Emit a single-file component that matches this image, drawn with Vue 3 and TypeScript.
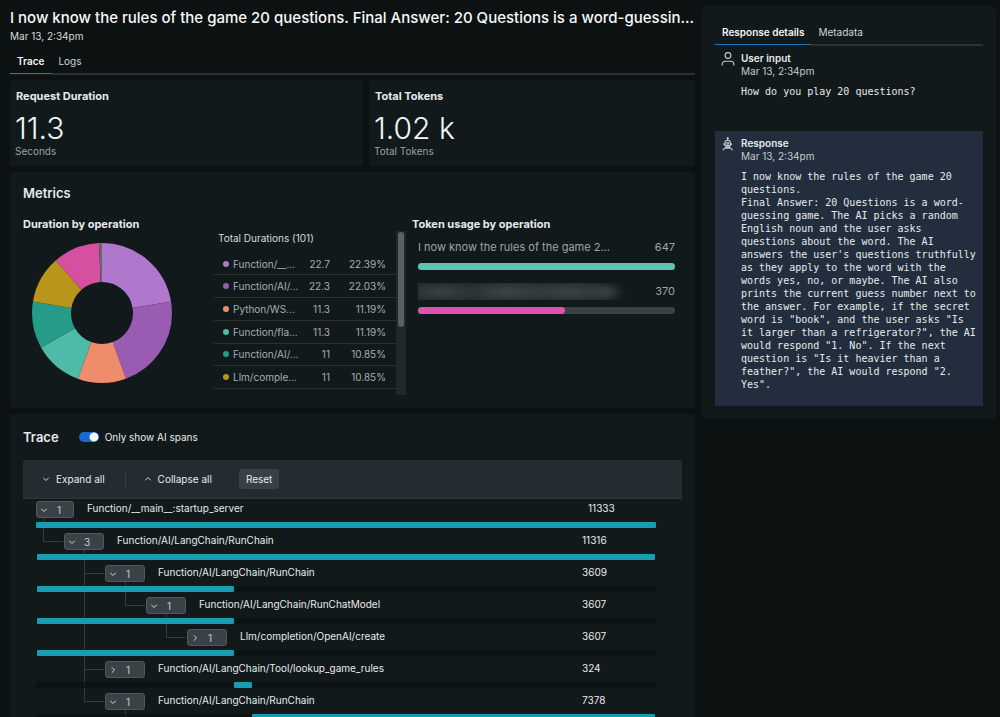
<script setup lang="ts">
import { ref, computed } from 'vue'

interface Operation {
  name: string
  value: string
  share: string
  percent: number
  color: string
}

interface Span {
  name: string
  count: number
  duration: number
  depth: number
  rowsToParent: number
  open: boolean
  start: number
  width: number
}

const operations: Operation[] = [
  { name: 'Function/__...', value: '22.7', share: '22.39%', percent: 22.39, color: '#b078cd' },
  { name: 'Function/AI/...', value: '22.3', share: '22.03%', percent: 22.03, color: '#9a5bb2' },
  { name: 'Python/WS...', value: '11.3', share: '11.19%', percent: 11.19, color: '#ef8c6c' },
  { name: 'Function/fla...', value: '11.3', share: '11.19%', percent: 11.19, color: '#4dbba8' },
  { name: 'Function/AI/...', value: '11', share: '10.85%', percent: 10.85, color: '#249c88' },
  { name: 'Llm/comple...', value: '11', share: '10.85%', percent: 10.85, color: '#ba951c' },
]

const slices = computed(() => {
  const parts = [
    ...operations.map((o) => ({ percent: o.percent, color: o.color })),
    { percent: 10.8, color: '#d650a2' },
    { percent: 0.7, color: '#626b70' },
  ]
  let offset = 0
  return parts.map((p) => {
    const slice = { ...p, offset }
    offset += p.percent
    return slice
  })
})

const spans: Span[] = [
  { name: 'Function/__main__:startup_server', count: 1, duration: 11333, depth: 0, rowsToParent: 0, open: true, start: 0, width: 100 },
  { name: 'Function/AI/LangChain/RunChain', count: 3, duration: 11316, depth: 1, rowsToParent: 1, open: true, start: 0.1, width: 99.8 },
  { name: 'Function/AI/LangChain/RunChain', count: 1, duration: 3609, depth: 2, rowsToParent: 1, open: true, start: 0.1, width: 31.8 },
  { name: 'Function/AI/LangChain/RunChatModel', count: 1, duration: 3607, depth: 3, rowsToParent: 1, open: true, start: 0.1, width: 31.8 },
  { name: 'Llm/completion/OpenAI/create', count: 1, duration: 3607, depth: 4, rowsToParent: 1, open: false, start: 0.1, width: 31.8 },
  { name: 'Function/AI/LangChain/Tool/lookup_game_rules', count: 1, duration: 324, depth: 2, rowsToParent: 4, open: false, start: 31.9, width: 2.9 },
  { name: 'Function/AI/LangChain/RunChain', count: 1, duration: 7378, depth: 2, rowsToParent: 5, open: true, start: 34.8, width: 65.1 },
]

const indents = [0, 28, 69, 110, 151]
const onlyAi = ref(true)
</script>

<template>
  <div class="page">
    <main class="main">
      <h1>I now know the rules of the game 20 questions. Final Answer: 20 Questions is a word-guessin...</h1>
      <p class="date">Mar 13, 2:34pm</p>

      <nav class="tabs">
        <button class="tab active" type="button">Trace</button>
        <button class="tab" type="button">Logs</button>
      </nav>

      <div class="stats">
        <section class="card stat">
          <h2>Request Duration</h2>
          <p class="big">11.3</p>
          <p class="unit">Seconds</p>
        </section>
        <section class="card stat">
          <h2>Total Tokens</h2>
          <p class="big">1.02 k</p>
          <p class="unit">Total Tokens</p>
        </section>
      </div>

      <section class="card metrics">
        <h2 class="section-title">Metrics</h2>
        <div class="metrics-grid">
          <div class="durations">
            <h3>Duration by operation</h3>
            <div class="durations-body">
              <svg class="donut" viewBox="0 0 140 140" aria-hidden="true">
                <g transform="rotate(-90 70 70)" fill="none" stroke-width="39">
                  <circle
                    v-for="(s, i) in slices"
                    :key="i"
                    cx="70"
                    cy="70"
                    r="50.5"
                    pathLength="100"
                    :stroke="s.color"
                    :stroke-dasharray="`${s.percent} ${100 - s.percent}`"
                    :stroke-dashoffset="-s.offset"
                  />
                </g>
              </svg>
              <div class="legend">
                <table>
                  <caption>Total Durations (101)</caption>
                  <tbody>
                    <tr v-for="(o, i) in operations" :key="i">
                      <td class="op">
                        <div class="op-cell">
                          <span class="dot" :style="{ background: o.color }"></span>
                          <span>{{ o.name }}</span>
                        </div>
                      </td>
                      <td class="num">{{ o.value }}</td>
                      <td class="share">{{ o.share }}</td>
                    </tr>
                  </tbody>
                </table>
                <div class="scroll"><div class="thumb"></div></div>
              </div>
            </div>
          </div>
          <div class="tokens">
            <h3>Token usage by operation</h3>
            <ul>
              <li>
                <div class="token-line">
                  <span>I now know the rules of the game 2...</span>
                  <span>647</span>
                </div>
                <div class="track"><div class="fill teal" :style="{ width: '100%' }"></div></div>
              </li>
              <li>
                <div class="token-line">
                  <span class="redacted"></span>
                  <span>370</span>
                </div>
                <div class="track"><div class="fill pink" :style="{ width: '57.2%' }"></div></div>
              </li>
            </ul>
          </div>
        </div>
      </section>

      <section class="card trace">
        <header class="trace-head">
          <h2>Trace</h2>
          <label class="switch">
            <input v-model="onlyAi" type="checkbox" />
            <span>Only show AI spans</span>
          </label>
        </header>
        <div class="toolbar">
          <button type="button" class="tool">
            <svg viewBox="0 0 8 8"><path d="M1.3 2.8 4 5.5 6.7 2.8" /></svg>Expand all
          </button>
          <span class="divider"></span>
          <button type="button" class="tool">
            <svg viewBox="0 0 8 8"><path d="M1.3 5.2 4 2.5 6.7 5.2" /></svg>Collapse all
          </button>
          <button type="button" class="reset">Reset</button>
        </div>
        <ul class="spans">
          <li v-for="(s, i) in spans" :key="i" class="span">
            <div class="span-line" :style="{ paddingLeft: indents[s.depth] + 'px' }">
              <span
                v-if="s.depth > 0"
                class="elbow"
                :style="{ left: indents[s.depth] - 21 + 'px', height: s.rowsToParent * 32 - 8 + 'px' }"
              ></span>
              <span v-if="i === spans.length - 1" class="stem" :style="{ left: indents[s.depth] + 20 + 'px' }"></span>
              <button type="button" class="chip" :class="{ root: s.depth === 0 }">
                <svg viewBox="0 0 8 8">
                  <path v-if="s.open" d="M1.3 2.8 4 5.5 6.7 2.8" />
                  <path v-else d="M2.8 1.3 5.5 4 2.8 6.7" />
                </svg>
                <span>{{ s.count }}</span>
              </button>
              <span class="span-name">{{ s.name }}</span>
              <span class="span-ms" :class="{ root: s.depth === 0 }">{{ s.duration }}</span>
            </div>
            <div class="bar-track">
              <div class="bar" :style="{ marginLeft: s.start + '%', width: s.width + '%' }"></div>
            </div>
          </li>
        </ul>
      </section>
    </main>

    <aside class="card details">
      <nav class="tabs">
        <button class="tab active" type="button">Response details</button>
        <button class="tab" type="button">Metadata</button>
      </nav>
      <article class="message">
        <svg class="who" viewBox="0 0 14 14"><circle cx="7" cy="3.5" r="2.9" /><path d="M1.2 13.5v-1.3a3 3 0 0 1 3-3h5.6a3 3 0 0 1 3 3v1.3" /></svg>
        <div>
          <h2>User input</h2>
          <p class="when">Mar 13, 2:34pm</p>
          <p class="mono">How do you play 20 questions?</p>
        </div>
      </article>
      <article class="message reply">
        <svg class="who" viewBox="0 0 14 14"><path d="M6.7 .3v3M4 8.6V6a2.7 2.7 0 0 1 5.4 0v2.6zM3 6.3v1.6M10.4 6.3v1.6M4.4 10h4.6M2.2 13.6v-1.2l1.6-1.3h5.8l1.6 1.3v1.2" /><circle cx="6.7" cy="6.3" r="1" /><circle cx="6.7" cy="1.4" r=".5" /></svg>
        <div>
          <h2>Response</h2>
          <p class="when">Mar 13, 2:34pm</p>
          <p class="mono">I now know the rules of the game 20 questions.<br />Final Answer: 20 Questions is a word-guessing game. The AI picks a random English noun and the user asks questions about the word. The AI answers the user's questions truthfully as they apply to the word with the words yes, no, or maybe. The AI also prints the current guess number next to the answer. For example, if the secret word is "book", and the user asks "Is it larger than a refrigerator?", the AI would respond "1. No". If the next question is "Is it heavier than a feather?", the AI would respond "2. Yes".</p>
        </div>
      </article>
    </aside>
  </div>
</template>

<style>
body {
  margin: 0;
  background: #0c1112;
}
</style>

<style scoped>
.page {
  display: grid;
  grid-template-columns: minmax(0, 1fr) 294px;
  gap: 7px;
  align-items: start;
  box-sizing: border-box;
  height: 100vh;
  overflow: hidden;
  padding: 6px 4px 0 10px;
  background: #0c1112;
  color: #e6eaea;
  font: 400 10px/14px Inter, sans-serif;
}
h1, h2, h3, p, ul {
  margin: 0;
  padding: 0;
}
ul {
  list-style: none;
}
button {
  border: 0;
  padding: 0;
  background: none;
  color: inherit;
  font: inherit;
}
svg {
  display: block;
  flex: none;
}
h1 {
  overflow: hidden;
  color: #f6f9f9;
  text-overflow: ellipsis;
  white-space: nowrap;
  font-size: 15px;
  line-height: 24px;
  font-weight: 500;
}
.date {
  line-height: 12px;
  color: #d4d8d8;
}
.card {
  border-radius: 3px;
  background: #12191b;
}
.tabs {
  display: flex;
  border-bottom: 2px solid #2b3233;
}
.tab {
  margin-bottom: -1px;
  border-bottom: 1px solid transparent;
  padding: 0 7px;
  line-height: 24px;
  color: #d0d5d5;
}
.tab.active {
  border-color: #2375bd;
  box-shadow: 0 1px 0 #12191b;
  color: #f2f5f5;
  font-weight: 600;
}
.main .tabs {
  margin-top: 7px;
}
.stats {
  display: grid;
  grid-template-columns: 353fr 326fr;
  gap: 6px;
  margin-top: 5px;
}
.stat {
  padding: 9px 5px 8px;
}
.stat h2 {
  padding-left: 1px;
  font-size: 11px;
  line-height: 14px;
  font-weight: 700;
}
.big {
  margin-top: 7px;
  color: #f4f7f7;
  font-size: 30px;
  line-height: 36px;
  font-weight: 300;
}
.unit {
  margin-top: -2px;
  color: #9ba1a2;
}
.metrics {
  margin-top: 6px;
  padding: 12px 13px 13px;
}
.section-title {
  font-size: 13px;
  line-height: 18px;
  font-weight: 600;
}
.metrics-grid {
  display: grid;
  grid-template-columns: minmax(0, 383fr) minmax(0, 270fr);
  gap: 6px;
  margin-top: 15px;
}
h3 {
  font-size: 11px;
  line-height: 14px;
  font-weight: 700;
}
.durations-body {
  display: flex;
  gap: 42px;
  padding-left: 9px;
}
.donut {
  width: 140px;
  height: 140px;
  margin-top: 12px;
}
.legend {
  display: flex;
  align-items: flex-start;
  flex: 1;
  min-width: 0;
}
table {
  flex: 1;
  height: 136px;
  table-layout: fixed;
  border-collapse: collapse;
  color: #a7adae;
}
caption {
  padding: 0 4px 8px;
  text-align: left;
  color: #d6dada;
}
td {
  border-bottom: 1px solid #293033;
  padding: 0;
}
.op-cell {
  display: flex;
  align-items: center;
  gap: 4px;
  padding-left: 9px;
  white-space: nowrap;
}
.dot {
  flex: none;
  width: 6px;
  height: 6px;
  border-radius: 50%;
}
.op {
  width: 86px;
}
.num {
  width: 30px;
  text-align: right;
}
.share {
  padding-right: 10px;
  text-align: right;
}
.scroll {
  width: 6px;
  height: 162px;
  padding: 1px 2px;
  background: #20282a;
}
.thumb {
  height: 95px;
  border-radius: 3px;
  background: #596164;
}
.tokens ul {
  padding: 7px 7px 0 6px;
}
.tokens li {
  margin-bottom: 12px;
}
.token-line {
  display: flex;
  justify-content: space-between;
  align-items: center;
  height: 18px;
  margin-bottom: 7px;
  color: #9fa5a6;
  font-size: 11px;
  line-height: 18px;
}
.redacted {
  width: 211px;
  height: 17px;
  background:
    radial-gradient(ellipse 36px 10px at 24px 9px, #3b4042, transparent),
    radial-gradient(ellipse 50px 11px at 90px 9px, #3f4446, transparent),
    radial-gradient(ellipse 50px 11px at 150px 9px, #3d4244, transparent),
    radial-gradient(ellipse 20px 10px at 186px 9px, #3b4042, transparent),
    linear-gradient(90deg, #262c2e, #262c2e 80%, #12191b);
}
.track {
  height: 7px;
  border-radius: 4px;
  background: #3b4244;
}
.fill {
  height: 100%;
  border-radius: 4px;
}
.teal {
  background: #5cc7ae;
}
.pink {
  background: #dc55ab;
}
.trace {
  margin-top: 6px;
  padding: 13px 13px 0;
}
.trace-head {
  display: flex;
  align-items: center;
  gap: 20px;
  height: 20px;
}
.trace-head h2 {
  font-size: 13px;
  font-weight: 600;
}
.switch {
  display: flex;
  align-items: center;
  gap: 6px;
}
.switch input {
  appearance: none;
  width: 20px;
  height: 10px;
  margin: 0;
  border-radius: 5px;
  background: radial-gradient(circle at 15px 5px, #f5f8fb 4px, transparent 5px), #1569d2;
}
.toolbar {
  display: flex;
  align-items: center;
  height: 38px;
  margin-top: 13px;
  border-bottom: 1px solid #2e3839;
  border-radius: 3px 3px 0 0;
  padding-left: 19px;
  background: #242c31;
}
.tool {
  display: flex;
  align-items: center;
  gap: 6px;
}
.tool svg, .chip svg {
  width: 8px;
  height: 8px;
  fill: none;
  stroke: #d5dadb;
  stroke-width: 1;
}
.divider {
  width: 1px;
  height: 21px;
  margin: 0 18px 0 20px;
  background: #333c40;
}
.reset {
  height: 20px;
  margin-left: 27px;
  border-radius: 3px;
  padding: 0 7px;
  background: #394146;
}
.spans {
  padding: 2px 26px 0 13px;
}
.span {
  height: 32px;
}
.span-line {
  position: relative;
  display: flex;
  align-items: flex-start;
  height: 17px;
  margin-bottom: 4px;
}
.chip {
  position: relative;
  display: flex;
  align-items: center;
  box-sizing: border-box;
  width: 40px;
  height: 17px;
  border: 1px solid #50585c;
  border-radius: 3px;
  padding-left: 3px;
  background: #3a4247;
  color: #c3c9cb;
}
.chip.root {
  width: 38px;
}
.chip span {
  width: 22px;
  text-align: center;
}
.span-name {
  flex: 1;
  margin-left: 13px;
}
.span-ms {
  width: 74px;
}
.span-ms.root {
  width: 68px;
}
.elbow {
  position: absolute;
  bottom: 8px;
  box-sizing: border-box;
  width: 20px;
  border: solid #343c3f;
  border-width: 0 0 1px 1px;
}
.stem {
  position: absolute;
  top: 17px;
  width: 1px;
  height: 15px;
  background: #343c3f;
}
.bar-track {
  position: relative;
  z-index: 1;
  height: 6px;
}
.bar-track::before {
  content: "";
  position: absolute;
  inset: 0;
  z-index: -1;
  background: #0c1112;
  opacity: 0.7;
}
.bar {
  height: 6px;
  border-radius: 1px;
  background: #1a9bb4;
}
.details {
  padding: 14px 13px 13px;
}
.message {
  display: grid;
  grid-template-columns: 14px minmax(0, 1fr);
  gap: 6px;
  padding: 6px 5px 33px 6px;
  line-height: 13px;
}
.message h2 {
  font-size: 10px;
  line-height: 13px;
  font-weight: 600;
}
.when {
  color: #c3c9cb;
}
.who {
  width: 14px;
  height: 14px;
  fill: none;
  stroke: #c5cbcd;
  stroke-width: 1.1;
}
.mono {
  margin-top: 7px;
  font: 400 10px/13px "DejaVu Sans Mono", monospace;
}
.reply {
  padding-bottom: 15px;
  background: #222e3e;
}
</style>
